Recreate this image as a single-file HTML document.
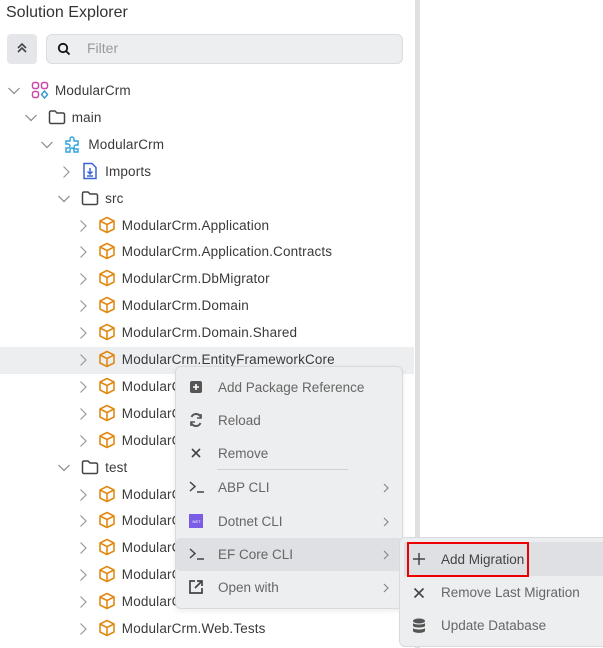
<!DOCTYPE html>
<html><head><meta charset="utf-8"><style>
*{margin:0;padding:0;box-sizing:border-box}
body{width:603px;height:648px;background:#fff;font-family:"Liberation Sans",sans-serif;color:#3a3a3a;position:relative;overflow:hidden;font-size:13.5px}
.a{position:absolute}
.row{position:absolute;left:0;width:414px;height:27px;line-height:27px;white-space:nowrap}
.row svg{position:absolute}
.t{position:absolute;top:0;letter-spacing:0.15px}
.mi{position:absolute;left:0;right:0;height:33px;line-height:33px;color:#666}
.mi .ic{position:absolute;left:12px;top:8px}
.mi .tx{position:absolute;left:42px}
.mi .ch{position:absolute;right:12px;top:12px}
</style></head><body>
<div class="a" style="left:6px;top:4px;font-size:16px;color:#333">Solution Explorer</div>
<div class="a" style="left:7px;top:34px;width:30px;height:30px;background:#e4e6e9;border-radius:4px"></div>
<svg class="a" style="left:15px;top:41px" width="14" height="14" viewBox="0 0 14 14" fill="none" stroke="#444" stroke-width="1.6"><path d="M3 7l4-4 4 4M3 11l4-4 4 4"/></svg>
<div class="a" style="left:46px;top:34px;width:357px;height:30px;background:#eceef0;border:1px solid #dadcdf;border-radius:6px"></div>
<svg class="a" style="left:57px;top:42px" width="14" height="14" viewBox="0 0 14 14" fill="none" stroke="#111" stroke-width="1.8"><circle cx="6" cy="6" r="4.2"/><path d="M9 9l3.5 3.5"/></svg>
<div class="a" style="left:87px;top:40px;color:#9a9a9a;font-size:14px">Filter</div>
<div class="a" style="left:415px;top:0;width:5px;height:648px;background:#e0e0e0"></div>
<div class="a" style="left:0;top:347px;width:414px;height:27px;background:#eceef0"></div>

<div id="tree"></div>
<script>
var rows=[
[0,'exp','sol','ModularCrm'],[1,'exp','fold','main'],[2,'exp','mod','ModularCrm'],[3,'col','imp','Imports'],[3,'exp','fold','src'],
[4,'col','pkg','ModularCrm.Application'],[4,'col','pkg','ModularCrm.Application.Contracts'],[4,'col','pkg','ModularCrm.DbMigrator'],
[4,'col','pkg','ModularCrm.Domain'],[4,'col','pkg','ModularCrm.Domain.Shared'],[4,'col','pkg','ModularCrm.EntityFrameworkCore'],
[4,'col','pkg','ModularCrm.HttpApi'],[4,'col','pkg','ModularCrm.HttpApi.Client'],[4,'col','pkg','ModularCrm.Web'],
[3,'exp','fold','test'],[4,'col','pkg','ModularCrm.Application.Tests'],[4,'col','pkg','ModularCrm.Domain.Tests'],
[4,'col','pkg','ModularCrm.EntityFrameworkCore.Tests'],[4,'col','pkg','ModularCrm.HttpApi.Client.ConsoleTestApp'],[4,'col','pkg','ModularCrm.TestBase'],[4,'col','pkg','ModularCrm.Web.Tests']];
var icons={
sol:'<svg width="18" height="18" viewBox="0 0 18 18" fill="none" stroke="#c94aa6" stroke-width="1.5"><rect x="1.5" y="1.5" width="6" height="6" rx="2"/><rect x="10.5" y="1.5" width="6" height="6" rx="2"/><rect x="1.5" y="10.5" width="6" height="6" rx="2"/><path stroke="#3a9ad9" d="M13.5 10l3 3.5-3 3.5-3-3.5z"/></svg>',
fold:'<svg width="18" height="18" viewBox="0 0 18 18" fill="none" stroke="#444" stroke-width="1.5"><path d="M1.5 4.5a1.5 1.5 0 0 1 1.5-1.5h4l2 2h6a1.5 1.5 0 0 1 1.5 1.5v7.5a1.5 1.5 0 0 1-1.5 1.5H3a1.5 1.5 0 0 1-1.5-1.5z"/></svg>',
mod:'<svg width="18" height="18" viewBox="0 0 18 18" fill="none" stroke="#2ea3dc" stroke-width="1.4"><path d="M2 6h4V4a2 2 0 0 1 4 0v2h4v4h-2a2 2 0 0 0 0 4h2v3H10v-2a2 2 0 0 0-4 0v2H2v-4h2a2 2 0 0 0 0-4H2z"/></svg>',
imp:'<svg width="18" height="18" viewBox="0 0 18 18" fill="none" stroke="#3b63d6" stroke-width="1.5"><path d="M3 1.5h8l4 4v11H3z"/><path d="M9 6v6M6.5 9.5 9 12l2.5-2.5M6 14h6"/></svg>',
pkg:'<svg width="18" height="18" viewBox="0 0 18 18" fill="none" stroke="#e08a14" stroke-width="1.6" stroke-linejoin="round"><path d="M9 1.5l7 3.5v8l-7 3.5-7-3.5v-8z"/><path d="M2 5l7 3.5 7-3.5M9 8.5v8"/></svg>'};
var h='';
rows.forEach(function(r,i){
 var top=77+i*26.9, x=14+r[0]*16.7;
 var ch=r[1]=='exp'?'<svg style="left:'+(x-7)+'px;top:9px" width="14" height="10" viewBox="0 0 14 10" fill="none" stroke="#888" stroke-width="1.2"><path d="M1.5 2l5.5 5.5L12.5 2"/></svg>':'<svg style="left:'+(x-3)+'px;top:7px" width="10" height="14" viewBox="0 0 10 14" fill="none" stroke="#999" stroke-width="1.2"><path d="M2.5 1.5 8 7l-5.5 5.5"/></svg>';
 h+='<div class="row" style="top:'+top+'px">'+ch+'<span style="position:absolute;left:'+(x+17)+'px;top:4px;line-height:0">'+icons[r[2]]+'</span><span class="t" style="left:'+(x+41)+'px">'+r[3]+'</span></div>';
});
document.getElementById('tree').innerHTML=h;
</script>

<div class="a" style="left:175px;top:366px;width:228px;height:243px;background:#edeef0;border:1px solid #d8dadd;border-radius:6px;box-shadow:0 2px 6px rgba(0,0,0,.08)">
 <div class="mi" style="top:4px"><svg class="ic" width="16" height="16" viewBox="0 0 16 16"><rect x="2" y="2" width="12" height="12" rx="2" fill="#555"/><path d="M8 5v6M5 8h6" stroke="#fff" stroke-width="1.6"/></svg><span class="tx">Add Package Reference</span></div>
 <div class="mi" style="top:37px"><svg class="ic" width="16" height="16" viewBox="0 0 16 16" fill="none" stroke="#555" stroke-width="2"><path d="M13 6a5 5 0 0 0-9.5-1M3 10a5 5 0 0 0 9.5 1"/><path d="M13 2v4H9M3 14v-4h4" stroke-width="1.6"/></svg><span class="tx">Reload</span></div>
 <div class="mi" style="top:70px"><svg class="ic" width="16" height="16" viewBox="0 0 16 16" fill="none" stroke="#444" stroke-width="1.6"><path d="M4 4l8 8M12 4l-8 8"/></svg><span class="tx">Remove</span></div>
 <div class="a" style="left:41px;top:102px;width:131px;height:1px;background:#d0d2d5"></div>
 <div class="mi" style="top:104px"><svg class="ic" width="18" height="16" viewBox="0 0 18 16" fill="none" stroke="#444" stroke-width="1.5"><path d="M2 3l5 4.5L2 12M9 13h7"/></svg><span class="tx">ABP CLI</span><svg class="ch" width="8" height="10" viewBox="0 0 8 10" fill="none" stroke="#888" stroke-width="1.2"><path d="M2 1l4 4-4 4"/></svg></div>
 <div class="mi" style="top:138px"><svg class="ic" width="16" height="16" viewBox="0 0 16 16"><rect x="1" y="1" width="14" height="14" fill="#7b5ce6"/><text x="8" y="10" font-size="4" fill="#fff" text-anchor="middle" font-family="Liberation Sans">.NET</text></svg><span class="tx">Dotnet CLI</span><svg class="ch" width="8" height="10" viewBox="0 0 8 10" fill="none" stroke="#888" stroke-width="1.2"><path d="M2 1l4 4-4 4"/></svg></div>
 <div class="mi" style="top:171px;background:#dfe0e3;border-radius:4px"><svg class="ic" width="18" height="16" viewBox="0 0 18 16" fill="none" stroke="#444" stroke-width="1.5"><path d="M2 3l5 4.5L2 12M9 13h7"/></svg><span class="tx">EF Core CLI</span><svg class="ch" width="8" height="10" viewBox="0 0 8 10" fill="none" stroke="#888" stroke-width="1.2"><path d="M2 1l4 4-4 4"/></svg></div>
 <div class="mi" style="top:204px"><svg class="ic" width="16" height="16" viewBox="0 0 16 16" fill="none" stroke="#444" stroke-width="1.7"><path d="M7 2H2v12h12V9M9 2h5v5M14 2 7 9"/></svg><span class="tx">Open with</span><svg class="ch" width="8" height="10" viewBox="0 0 8 10" fill="none" stroke="#888" stroke-width="1.2"><path d="M2 1l4 4-4 4"/></svg></div>
</div>

<div class="a" style="left:399px;top:537px;width:210px;height:110px;background:#edeef0;border:1px solid #d8dadd;border-radius:6px">
 <div class="a" style="left:4px;top:4px;width:206px;height:34px;background:#dfe0e3"></div>
 <div class="a" style="left:7px;top:4px;width:122px;height:35px;border:2.5px solid #ee0000"></div>
 <svg class="a" style="left:12px;top:14px" width="14" height="14" viewBox="0 0 14 14" stroke="#444" stroke-width="1.5"><path d="M7 1v12M1 7h12"/></svg>
 <div class="a" style="left:41px;top:14px;color:#444">Add Migration</div>
 <svg class="a" style="left:13px;top:49px" width="12" height="12" viewBox="0 0 12 12" stroke="#444" stroke-width="1.6"><path d="M1.5 1.5l9 9M10.5 1.5l-9 9"/></svg>
 <div class="a" style="left:41px;top:47px;color:#666">Remove Last Migration</div>
 <svg class="a" style="left:12px;top:80px" width="14" height="16" viewBox="0 0 14 16" fill="#555"><ellipse cx="7" cy="3" rx="6" ry="2.5"/><path d="M1 5c1 2 11 2 12 0v3c-1 2-11 2-12 0zM1 10c1 2 11 2 12 0v3c-1 2.5-11 2.5-12 0z"/></svg>
 <div class="a" style="left:41px;top:80px;color:#666">Update Database</div>
</div>
</body></html>
